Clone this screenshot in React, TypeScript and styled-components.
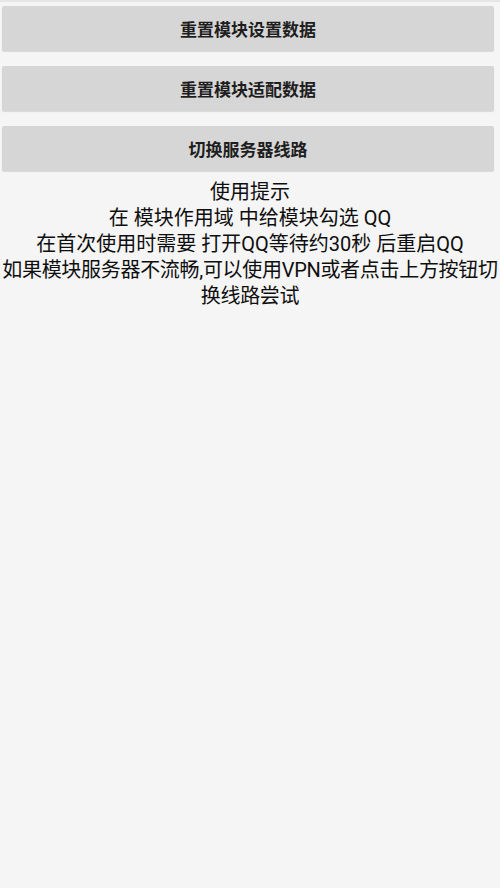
import styled, { createGlobalStyle } from "styled-components";

const GlobalStyle = createGlobalStyle`
  html, body {
    margin: 0;
    padding: 0;
    background: #f5f5f5;
  }
  body {
    font-family: Roboto, "Noto Sans CJK SC", sans-serif;
    color: #141414;
  }
`;

const Page = styled.div`
  min-height: 888px;
  background: #f5f5f5;
  border-top: 2px solid #e6e6e6;
  box-sizing: border-box;
  padding-top: 4px;
  display: flex;
  flex-direction: column;
`;

const ButtonList = styled.div`
  display: flex;
  flex-direction: column;
  gap: 15px;
  padding: 0 6px 0 2px;
`;

const ActionButton = styled.button`
  height: 45px;
  border: none;
  border-radius: 2px;
  background: #d6d6d6;
  box-shadow: 0 1px 1px rgba(0, 0, 0, 0.12);
  font-family: Roboto, "Noto Sans CJK SC", sans-serif;
  font-size: 17px;
  font-weight: 700;
  color: #1e1e1e;
  cursor: pointer;
  padding: 0;
`;

const Tips = styled.div`
  margin-top: 8px;
  display: flex;
  flex-direction: column;
  align-items: center;
  text-align: center;
  color: #0e0e0e;
`;

const TipLine = styled.div`
  font-size: 20px;
  line-height: 26px;
  height: 26px;
`;

const WrapLine = styled(TipLine)`
  height: auto;
  letter-spacing: -0.3px;
`;

const tips = [
  "使用提示",
  "在 模块作用域 中给模块勾选 QQ",
  "在首次使用时需要 打开QQ等待约30秒 后重启QQ",
];

const buttons = ["重置模块设置数据", "重置模块适配数据", "切换服务器线路"];

const App = () => {
  return (
    <>
      <GlobalStyle />
      <Page>
        <ButtonList>
          {buttons.map((label) => (
            <ActionButton key={label}>{label}</ActionButton>
          ))}
        </ButtonList>
        <Tips>
          {tips.map((line) => (
            <TipLine key={line}>{line}</TipLine>
          ))}
          <WrapLine>
            如果模块服务器不流畅,可以使用VPN或者点击上方按钮切换线路尝试
          </WrapLine>
        </Tips>
      </Page>
    </>
  );
};

export default App;
